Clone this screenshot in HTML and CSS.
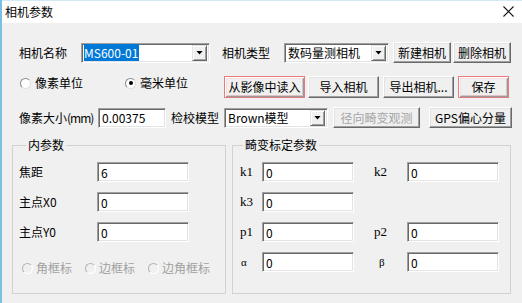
FILE: index.html
```html
<!DOCTYPE html>
<html lang="zh-CN">
<head>
  <meta charset="UTF-8">
  <title>相机参数</title>
  <link rel="stylesheet" href="styles.css">
</head>
<body>
  <div class="window">
    <div class="titlebar">
      <span class="title">相机参数</span>
      <span class="close">
        <svg width="11" height="11" viewBox="0 0 11 11"><path d="M0.5 0.5L10.5 10.5M10.5 0.5L0.5 10.5" stroke="#111" stroke-width="1.1"/></svg>
      </span>
    </div>
    <div class="content">
      <div class="row row-name">
        <span class="lbl lbl-name">相机名称</span>
        <div class="field combo combo-name"><span class="combo-text"><span class="selected">MS600-01</span></span><span class="arrow"></span></div>
        <span class="lbl lbl-type">相机类型</span>
        <div class="field combo combo-type"><span class="combo-text">数码量测相机</span><span class="arrow"></span></div>
        <button class="btn btn-new">新建相机</button>
        <button class="btn btn-del">删除相机</button>
      </div>
      <div class="row row-unit">
        <label class="radio radio-px"><span class="dot"></span>像素单位</label>
        <label class="radio radio-mm"><span class="dot checked"></span>毫米单位</label>
        <button class="btn btn-hot btn-read">从影像中读入</button>
        <button class="btn btn-import">导入相机</button>
        <button class="btn btn-export">导出相机...</button>
        <button class="btn btn-hot btn-save">保存</button>
      </div>
      <div class="row row-size">
        <span class="lbl lbl-size">像素大小<span class="unit">(mm)</span></span>
        <input class="field input-size" type="text" value="0.00375">
        <span class="lbl lbl-model">检校模型</span>
        <div class="field combo combo-model"><span class="combo-text">Brown模型</span><span class="arrow"></span></div>
        <button class="btn btn-radial" disabled>径向畸变观测</button>
        <button class="btn btn-gps">GPS偏心分量</button>
      </div>
      <div class="groups">
        <fieldset class="group group-inner">
          <legend>内参数</legend>
          <div class="prow">
            <span class="lbl plabel">焦距</span>
            <input class="field pinput" type="text" value="6">
          </div>
          <div class="prow">
            <span class="lbl plabel">主点X0</span>
            <input class="field pinput" type="text" value="0">
          </div>
          <div class="prow">
            <span class="lbl plabel">主点Y0</span>
            <input class="field pinput" type="text" value="0">
          </div>
          <div class="frame-row">
            <label class="radio disabled"><span class="dot"></span>角框标</label>
            <label class="radio disabled"><span class="dot"></span>边框标</label>
            <label class="radio disabled"><span class="dot"></span>边角框标</label>
          </div>
        </fieldset>
        <fieldset class="group group-dist">
          <legend>畸变标定参数</legend>
          <div class="prow">
            <span class="sym sym-a">k1</span>
            <input class="field pinput" type="text" value="0">
            <span class="sym sym-b">k2</span>
            <input class="field pinput" type="text" value="0">
          </div>
          <div class="prow">
            <span class="sym sym-a">k3</span>
            <input class="field pinput" type="text" value="0">
          </div>
          <div class="prow prow-gap">
            <span class="sym sym-a">p1</span>
            <input class="field pinput" type="text" value="0">
            <span class="sym sym-b">p2</span>
            <input class="field pinput" type="text" value="0">
          </div>
          <div class="prow">
            <span class="sym sym-a greek">α</span>
            <input class="field pinput" type="text" value="0">
            <span class="sym sym-b greek beta">β</span>
            <input class="field pinput" type="text" value="0">
          </div>
        </fieldset>
      </div>
    </div>
  </div>
</body>
</html>
```

FILE: styles.css
```css
* {
  box-sizing: border-box;
}
body {
  margin: 0;
  background: #f0f0f0;
  font-family: "Noto Sans CJK SC", sans-serif;
  font-size: 12px;
  color: #000;
}
.window {
  width: 522px;
  height: 303px;
  border-left: 2px solid #78bfe2;
  background: #f0f0f0;
  overflow: hidden;
}
.titlebar {
  height: 23px;
  background: #fff;
  border-top: 1px solid #d3e9f5;
  display: flex;
  align-items: center;
  justify-content: space-between;
  padding: 0 8px 0 3px;
}
.title {
  line-height: 14px;
}
.close {
  display: flex;
  margin-top: -1px;
}
.content {
  padding-top: 19px;
}
.row {
  display: flex;
  align-items: center;
}
.lbl {
  line-height: 16px;
  white-space: nowrap;
}

/* sunken edit / combo */
.field {
  background: #fff;
  border: 1px solid;
  border-color: #a0a0a0 #fff #fff #a0a0a0;
  box-shadow: inset 1px 1px 0 #696969, inset -1px -1px 0 #e3e3e3;
  font: inherit;
  color: #000;
  height: 20px;
  padding: 0 0 0 3px;
  outline: none;
}
.combo {
  display: flex;
  align-items: center;
  padding: 1px 2px 1px 1px;
}
.combo-text {
  flex: 1;
  line-height: 16px;
  padding-left: 2px;
  white-space: nowrap;
}
.selected {
  background: #0078d7;
  color: #fff;
  padding: 0 1px 0 0;
  margin-left: -1px;
}
.arrow {
  width: 15px;
  height: 16px;
  background: #f0f0f0;
  border: 1px solid;
  border-color: #e3e3e3 #696969 #696969 #e3e3e3;
  box-shadow: inset 1px 1px 0 #fff, inset -1px -1px 0 #a0a0a0;
  display: flex;
  align-items: center;
  justify-content: center;
}
.arrow::after {
  content: "";
  width: 7px;
  height: 4px;
  background: #000;
  clip-path: polygon(0 0, 100% 0, 50% 100%);
}

/* raised push button */
.btn {
  height: 21px;
  padding: 0;
  background: #f0f0f0;
  border: 1px solid;
  border-color: #fff #696969 #696969 #fff;
  box-shadow: inset -1px -1px 0 #a0a0a0, inset 1px 1px 0 #e3e3e3;
  font: inherit;
  color: #000;
  line-height: 16px;
  white-space: nowrap;
}
.btn-hot {
  border-color: #e57b7b;
  box-shadow: inset 1px 1px 0 #fff, inset -1px -1px 0 #9a9a9a, inset 2px 2px 0 #f6dede, inset -2px -2px 0 #dcc4c4;
}
.btn[disabled] {
  color: #a6a6a6;
}

/* radio */
.radio {
  display: flex;
  align-items: center;
  line-height: 16px;
  white-space: nowrap;
}
.dot {
  width: 11px;
  height: 11px;
  border-radius: 50%;
  background: #fff;
  border: 1px solid;
  border-color: #8a8a8a #e0e0e0 #e0e0e0 #8a8a8a;
  margin-right: 4px;
  display: flex;
  align-items: center;
  justify-content: center;
}
.dot.checked::after {
  content: "";
  width: 4px;
  height: 4px;
  border-radius: 50%;
  background: #000;
}
.radio.disabled {
  color: #a0a0a0;
}
.radio.disabled .dot {
  background: #f0f0f0;
  border-color: #b4b4b4 #fff #fff #b4b4b4;
  margin-right: 3px;
}

/* row 1 */
.row-name {
  height: 21px;
  padding-left: 17px;
}
.lbl-name { width: 48px; }
.combo-name { margin-left: 14px; width: 129px; }
.lbl-type { margin-left: 12px; width: 48px; }
.combo-type { margin-left: 14px; width: 105px; }
.btn-new { margin-left: 4px; width: 58px; }
.btn-del { margin-left: 2px; width: 58px; }

/* row 2 */
.row-unit {
  margin-top: 13px;
  height: 22px;
  padding-left: 18px;
}
.row-unit .radio {
  align-self: flex-start;
  margin-top: -1px;
}
.radio-px { width: 105px; }
.radio-mm { width: 99px; }
.btn-read { width: 81px; height: 22px; }
.btn-import { margin-left: 3px; width: 71px; height: 22px; }
.btn-export { margin-left: 4px; width: 71px; height: 22px; }
.btn-save { margin-left: 4px; width: 51px; height: 22px; }

/* row 3 */
.row-size {
  margin-top: 9px;
  height: 21px;
  padding-left: 17px;
}
.lbl-size { width: 79px; }
.unit {
  letter-spacing: -1px;
}
.input-size { width: 68px; }
.lbl-model { margin-left: 5px; width: 53px; }
.combo-model { width: 104px; }
.btn-radial { margin-left: 5px; width: 87px; }
.btn-gps { margin-left: 9px; width: 83px; }

/* group boxes */
.groups {
  display: flex;
  margin-top: 11px;
  padding-left: 10px;
}
.group {
  margin: 0;
  height: 155px;
  border: 1px solid #d2d2d2;
  padding: 11px 0 0 6px;
}
.group legend {
  padding: 0 2px;
  line-height: 12px;
  font-size: 12px;
}
.group-inner {
  width: 214px;
}
.group-inner legend {
  margin-left: 7px;
}
.group-dist {
  margin-left: 6px;
  width: 279px;
  padding-left: 7px;
}
.group-dist legend {
  margin-left: 3px;
}
.prow {
  display: flex;
  align-items: center;
  height: 20px;
  margin-bottom: 10px;
}
.prow-gap {
  margin-top: 5px;
}
.plabel {
  width: 78px;
}
.pinput {
  width: 92px;
}
.frame-row {
  display: flex;
  margin-top: 18px;
  padding-left: 3px;
}
.frame-row .radio {
  width: 63px;
}
.sym {
  font-family: "Liberation Serif", serif;
  font-size: 13px;
  line-height: 16px;
}
.sym-a { width: 22px; }
.sym-b { width: 53px; padding-left: 20px; }
.greek { font-size: 11px; padding-left: 1px; }
.sym-b.beta { padding-left: 25px; }
```
